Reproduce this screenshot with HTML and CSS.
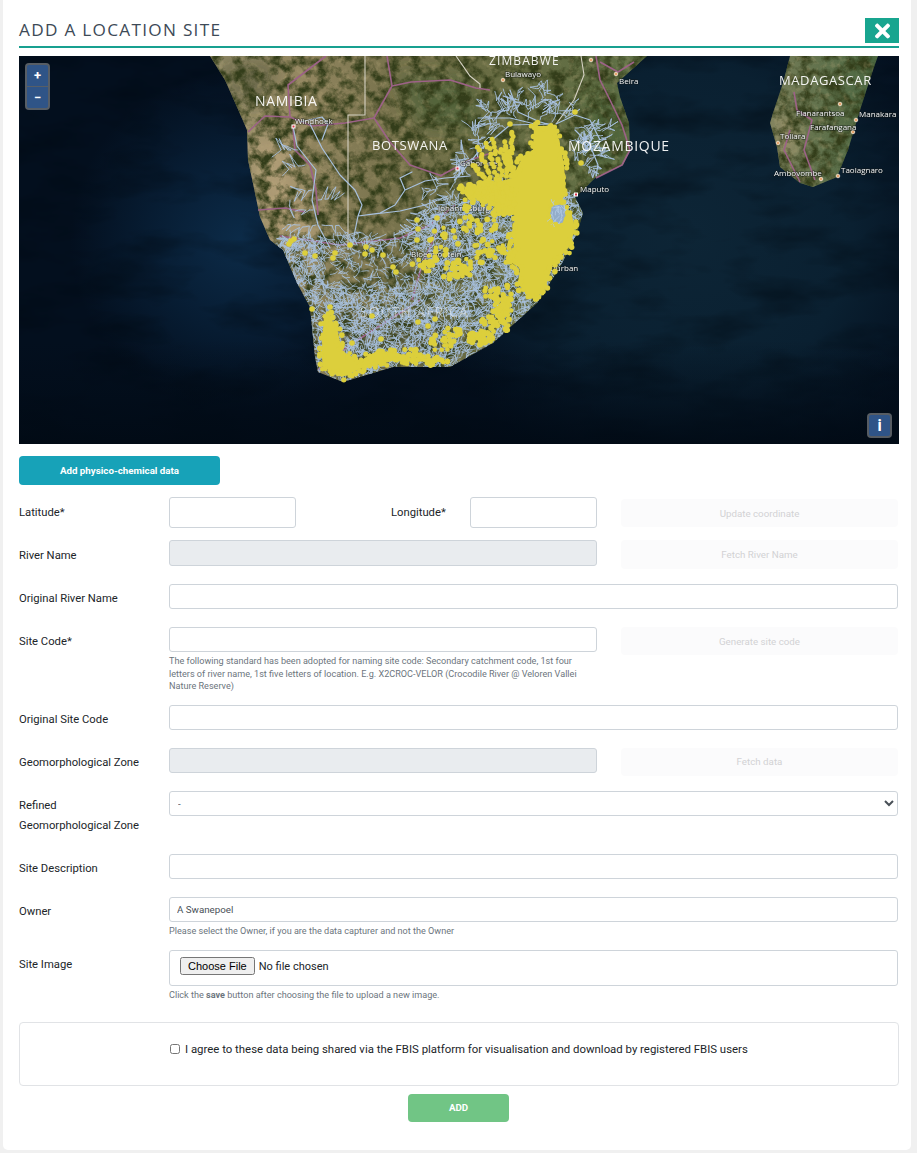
FILE: index.html
```html
<!DOCTYPE html>
<html lang="en">
<head>
<meta charset="utf-8">
<title>Add a location site</title>
<link rel="stylesheet" href="styles.css">
</head>
<body>
<main class="card">
  <header class="head">
    <h1 class="title">ADD A LOCATION SITE</h1>
    <button class="close" type="button" aria-label="Close">
      <svg class="close-icon" viewBox="0 0 352 512"><path d="M242.72 256l100.07-100.07c12.28-12.28 12.28-32.19 0-44.48l-22.24-22.24c-12.28-12.28-32.19-12.28-44.48 0L176 189.28 75.93 89.21c-12.28-12.28-32.19-12.28-44.48 0L9.21 111.45c-12.28 12.28-12.28 32.19 0 44.48L109.28 256 9.21 356.07c-12.28 12.28-12.28 32.19 0 44.48l22.24 22.24c12.28 12.28 32.2 12.28 44.48 0L176 322.72l100.07 100.07c12.28 12.28 32.2 12.28 44.48 0l22.24-22.24c12.28-12.28 12.28-32.19 0-44.48L242.72 256z"/></svg>
    </button>
  </header>

  <section class="map">
    <svg class="map-svg" viewBox="19 56 880 388" xmlns="http://www.w3.org/2000/svg">
      <defs>
        <linearGradient id="landGrad" x1="210" y1="0" x2="640" y2="0" gradientUnits="userSpaceOnUse">
          <stop offset="0" stop-color="#98906c"/>
          <stop offset=".2" stop-color="#958862"/>
          <stop offset=".4" stop-color="#7a744e"/>
          <stop offset=".7" stop-color="#666c42"/>
          <stop offset="1" stop-color="#5e7046"/>
        </linearGradient>
        <linearGradient id="madGrad" x1="770" y1="0" x2="878" y2="0" gradientUnits="userSpaceOnUse">
          <stop offset="0" stop-color="#777d58"/>
          <stop offset="1" stop-color="#48653f"/>
        </linearGradient>
        <radialGradient id="seaWest" cx="240" cy="240" r="170" gradientUnits="userSpaceOnUse">
          <stop offset="0" stop-color="#0c2b48"/>
          <stop offset=".55" stop-color="#071c32"/>
          <stop offset="1" stop-color="#030f1e"/>
        </radialGradient>
        <radialGradient id="seaEast" cx="690" cy="230" r="270" gradientUnits="userSpaceOnUse">
          <stop offset="0" stop-color="#0d2536"/>
          <stop offset=".6" stop-color="#0a2031"/>
          <stop offset="1" stop-color="#0a2031" stop-opacity="0"/>
        </radialGradient>
        <linearGradient id="seaBottom" x1="0" y1="340" x2="0" y2="444" gradientUnits="userSpaceOnUse">
          <stop offset="0" stop-color="#020c18" stop-opacity="0"/>
          <stop offset="1" stop-color="#010a14" stop-opacity=".85"/>
        </linearGradient>
        <clipPath id="landClip">
          <path d="M210 56 225 80 237 107 247 130 248 160 255 193 260 217 270 240 283 250 297 283 310 307 315 357 318 372 343 382 393 367 450 367 493 343 537 303 560 267 577 233 583 213 575 197 583 190 595 178 623 165 630 150 629 123 620 97 617 83 637 65 647 56Z"/>
          <path d="M790 56 783 83 773 113 770 123 777 147 780 167 800 183 813 187 837 177 848 150 860 110 873 70 878 56Z"/>
        </clipPath>
        <filter id="landNoise" x="0" y="0" width="100%" height="100%" color-interpolation-filters="sRGB">
          <feTurbulence type="fractalNoise" baseFrequency=".085" numOctaves="5" seed="7"/>
          <feColorMatrix type="matrix" values="0 0 0 0 .2  0 0 0 0 .24  0 0 0 0 .1  3.2 0 0 0 -1.25"/>
        </filter>
        <filter id="landLight" x="0" y="0" width="100%" height="100%" color-interpolation-filters="sRGB">
          <feTurbulence type="fractalNoise" baseFrequency=".16" numOctaves="3" seed="23"/>
          <feColorMatrix type="matrix" values="0 0 0 0 .74  0 0 0 0 .68  0 0 0 0 .5  0 3 0 0 -1.5"/>
        </filter>
        <filter id="seaNoise" x="0" y="0" width="100%" height="100%" color-interpolation-filters="sRGB">
          <feTurbulence type="fractalNoise" baseFrequency=".012 .03" numOctaves="4" seed="11"/>
          <feColorMatrix type="matrix" values="0 0 0 0 .0  0 0 0 0 .03  0 0 0 0 .06  1 0 0 0 -.42"/>
        </filter>
        <filter id="soft"><feGaussianBlur stdDeviation="9"/></filter>
      </defs>

      <rect class="sea-base" x="19" y="56" width="880" height="388"/>
      <rect x="19" y="56" width="880" height="388" fill="url(#seaWest)"/>
      <rect x="19" y="56" width="880" height="388" fill="url(#seaEast)"/>
      <rect x="19" y="56" width="880" height="388" filter="url(#seaNoise)"/>
      <rect x="19" y="340" width="880" height="104" fill="url(#seaBottom)"/>

      <g clip-path="url(#landClip)">
        <rect x="200" y="56" width="460" height="340" fill="url(#landGrad)"/>
        <rect x="760" y="56" width="130" height="140" fill="url(#madGrad)"/>
        <g filter="url(#soft)">
          <path class="patch-sand" d="M245 135 290 140 300 200 330 250 290 260 262 215Z"/>
          <path class="patch-dark" d="M215 60 280 60 262 105 235 100Z"/>
          <path class="patch-green" d="M395 75 470 80 480 130 420 125Z"/>
          <path class="patch-dark" d="M300 310 420 320 470 355 330 375Z"/>
          <path class="patch-green" d="M590 100 625 100 625 160 590 170Z"/>
          <path class="patch-sand" d="M775 110 790 120 800 150 782 160Z"/>
        </g>
        <rect x="200" y="56" width="700" height="340" filter="url(#landNoise)"/>
        <rect x="200" y="56" width="700" height="340" class="land-light" filter="url(#landLight)"/>
      </g>

      <g class="roads">
        <path d="M248 132 265 116 290 117 312 126 345 123 374 118 392 86 411 82 450 80 476 88 490 90"/>
        <path d="M290 117 288 85 305 72 326 56"/>
        <path d="M392 86 388 62 387 56"/>
        <path d="M374 118 390 142 410 165 442 176"/>
        <path d="M293 127 295 150 310 165 316 190 318 215"/>
        <path d="M258 210 285 208 305 212"/>
        <path d="M440 176 470 160 500 150"/>
        <path d="M596 56 600 80 610 100 622 125 630 150 622 165 596 178"/>
        <path d="M600 62 618 72 634 62"/>
        <path d="M280 236 340 245 400 238 430 225 455 205"/>
        <path d="M412 300 422 265 440 225"/>
        <path d="M318 370 350 345 420 300"/>
        <path d="M794 92 797 110 812 120 804 150 815 180"/>
        <path d="M790 130 784 150 800 182"/>
      </g>
      <g class="borders">
        <path d="M365 56V115H348V250"/>
        <path d="M456 56 470 76 480 84V88"/>
        <path d="M581 56 584 75 574 100 556 124"/>
      </g>

      <g class="rivers" id="rivers" clip-path="url(#landClip)"></g>

      <g class="labels">
        <text class="country lg faded" x="360" y="317">SOUTH AFRICA</text>
        <text class="city" x="411" y="257">Bloemfontein</text>
        <text class="city" x="438" y="211">Johannesburg</text>
        <text class="city" x="460" y="166">Gaborone</text>
        <text class="city" x="550" y="271">Durban</text>
      </g>

      <g class="pins">
        <rect class="pin-red" x="456" y="167" width="3" height="3"/>
        <rect class="pin-red" x="457" y="259" width="3" height="3"/>
      </g>

      <g class="sites" id="sites">
        <path d="M534 126 555 126 559 140 564 165 566 193 560 204 571 212 575 228 570 246 553 265 545 288 536 299 527 294 518 284 520 268 510 262 514 245 512 232 516 215 490 205 478 196 470 192 490 184 512 178 523 156 533 150Z"/>
        <path d="M322 358 323 367 342 377 360 369 393 361 445 362 443 359 410 358 393 351 373 353 360 361 342 351 338 332 329 314 324 316 323 330 322 347Z"/>
      </g>
      <g class="holes" id="holes">
        <path d="M552 206 563 204 566 214 562 224 553 222 550 214Z"/>
      </g>

      <g class="pins">
        <rect class="pin-red" x="292" y="125" width="3" height="3"/>
        <rect class="pin-red" x="574.500" y="193" width="3" height="3"/>
        <circle class="pin-city" cx="503" cy="80" r="1.800"/>
        <circle class="pin-city" cx="591" cy="60" r="1.800"/>
        <circle class="pin-city" cx="616" cy="74" r="1.800"/>
        <circle class="pin-city" cx="840" cy="104" r="1.800"/>
        <circle class="pin-city" cx="853" cy="132" r="1.800"/>
        <circle class="pin-city" cx="778" cy="143" r="1.800"/>
        <circle class="pin-city" cx="821" cy="179" r="1.800"/>
        <circle class="pin-city" cx="838" cy="176" r="1.800"/>
        <circle class="pin-city" cx="856" cy="120" r="1.800"/>
      </g>

      <g class="labels">
        <text class="country lg" x="255" y="106">NAMIBIA</text>
        <text class="country" x="372" y="150">BOTSWANA</text>
        <text class="country lg" x="568" y="151">MOZAMBIQUE</text>
        <text class="country" x="779" y="85">MADAGASCAR</text>
        <text class="country zim" x="489" y="65">ZIMBABWE</text>
        <text class="city" x="295" y="124">Windhoek</text>
        <text class="city" x="505" y="77">Bulawayo</text>
        <text class="city" x="619" y="84">Beira</text>
        <text class="city" x="580" y="192">Maputo</text>
        <text class="city" x="796" y="116">Fianarantsoa</text>
        <text class="city" x="859" y="117">Manakara</text>
        <text class="city" x="810" y="130">Farafangana</text>
        <text class="city" x="780" y="139">Toliara</text>
        <text class="city" x="774" y="176">Ambovombe</text>
        <text class="city" x="841" y="173">Taolagnaro</text>
      </g>
    </svg>
    <div class="zoom-ctl">
      <button class="map-btn" type="button">+</button>
      <button class="map-btn" type="button">&#8722;</button>
    </div>
    <div class="info-ctl">
      <button class="map-btn info" type="button">i</button>
    </div>
  </section>

  <button class="btn-physico" type="button">Add physico-chemical data</button>

  <form class="form">
    <div class="row row-lat">
      <label class="lbl">Latitude*</label>
      <div class="field coords">
        <input class="ctl ctl-tall ctl-short" type="text">
        <label class="lbl-lon">Longitude*</label>
        <input class="ctl ctl-tall ctl-short" type="text">
      </div>
      <button class="btn-side" type="button" disabled>Update coordinate</button>
    </div>

    <div class="row row-river">
      <label class="lbl">River Name</label>
      <div class="field"><input class="ctl ctl-river" type="text" disabled></div>
      <button class="btn-side btn-side-tall" type="button" disabled>Fetch River Name</button>
    </div>

    <div class="row">
      <label class="lbl">Original River Name</label>
      <div class="field"><input class="ctl" type="text"></div>
    </div>

    <div class="row row-code">
      <label class="lbl">Site Code*</label>
      <div class="field">
        <input class="ctl" type="text">
        <small class="hint hint-code">The following standard has been adopted for naming site code: Secondary catchment code, 1st four letters of river name, 1st five letters of location. E.g. X2CROC-VELOR (Crocodile River @ Veloren Vallei Nature Reserve)</small>
      </div>
      <button class="btn-side" type="button" disabled>Generate site code</button>
    </div>

    <div class="row">
      <label class="lbl">Original Site Code</label>
      <div class="field"><input class="ctl" type="text"></div>
    </div>

    <div class="row row-geo">
      <label class="lbl">Geomorphological Zone</label>
      <div class="field"><input class="ctl" type="text" disabled></div>
      <button class="btn-side" type="button" disabled>Fetch data</button>
    </div>

    <div class="row row-refined">
      <label class="lbl">Refined<br>Geomorphological Zone</label>
      <div class="field"><select class="ctl ctl-select"><option>-</option></select></div>
    </div>

    <div class="row">
      <label class="lbl">Site Description</label>
      <div class="field"><input class="ctl" type="text"></div>
    </div>

    <div class="row row-owner">
      <label class="lbl">Owner</label>
      <div class="field">
        <input class="ctl" type="text" value="A Swanepoel">
        <small class="hint">Please select the Owner, if you are the data capturer and not the Owner</small>
      </div>
    </div>

    <div class="row row-image">
      <label class="lbl">Site Image</label>
      <div class="field">
        <input class="ctl ctl-file" type="file">
        <small class="hint">Click the <b>save</b> button after choosing the file to upload a new image.</small>
      </div>
    </div>

    <div class="agree">
      <label class="agree-label"><input class="agree-check" type="checkbox"> I agree to these data being shared via the FBIS platform for visualisation and download by registered FBIS users</label>
    </div>

    <div class="actions"><button class="btn-add" type="button">ADD</button></div>
  </form>
</main>
<script src="map.js"></script>
</body>
</html>
```

FILE: styles.css
```css
* { box-sizing: border-box; }
html, body { margin: 0; padding: 0; }
body {
  background: #f0f0f0;
  font-family: Roboto, "Liberation Sans", sans-serif;
  font-size: 11.25px;
  color: #212529;
  width: 917px;
  height: 1153px;
  overflow: hidden;
}
.card {
  margin-left: 3px;
  width: 908px;
  height: 1150px;
  background: #fff;
  border-radius: 0 0 5px 5px;
  padding: 0 12px 0 16px;
}
.head {
  height: 48px;
  padding-top: 18px;
  display: flex;
  justify-content: space-between;
  border-bottom: 2px solid #18a090;
}
.title {
  margin: 2px 0 0;
  font-family: "Open Sans", sans-serif;
  font-weight: 400;
  font-size: 17.2px;
  line-height: 20px;
  letter-spacing: 1.28px;
  color: #3d4a57;
}
.close {
  width: 34px;
  height: 25px;
  padding: 0;
  border: 0;
  background: #18a58f;
  display: flex;
  align-items: center;
  justify-content: center;
}
.close-icon { width: 15px; height: 22px; fill: #fff; }

.map { position: relative; margin-top: 8px; height: 388px; }
.map-svg { display: block; width: 880px; height: 388px; }
.sea-base { fill: #030e1b; }
.patch-sand { fill: #b8a27c; opacity: .7; }
.patch-dark { fill: #4a4f34; opacity: .55; }
.patch-green { fill: #3f5a32; opacity: .6; }
.land-light { opacity: .3; }
.roads path { fill: none; stroke: #9c6287; stroke-width: 1.6; stroke-linejoin: round; }
.borders path { fill: none; stroke: #d6d2c4; stroke-width: 1.1; }
.rivers path { fill: none; stroke: #a8c1df; stroke-linecap: round; stroke-linejoin: round; }
.sites path, .sites circle, .holes circle { fill: #dccf3c; }
.holes path { fill: #93adca; }
.holes .hole-line { fill: none; stroke: #b4cbe6; stroke-width: .8; }
.pin-red { fill: #d8374a; stroke: #fff; stroke-width: 1; }
.pin-city { fill: #e8a56e; stroke: #f5e7d6; stroke-width: .8; }
.country {
  font-family: "Open Sans", sans-serif;
  font-size: 13px;
  letter-spacing: .6px;
  fill: #fff;
  opacity: .93;
}
.country.lg { font-size: 14px; letter-spacing: .7px; }
.country.faded { opacity: .45; letter-spacing: 1px; }
.country.zim { font-size: 12px; letter-spacing: 1.1px; }
.city {
  font-family: "Open Sans", sans-serif;
  font-size: 8px;
  fill: #f4f4f4;
  paint-order: stroke;
  stroke: rgba(20,25,25,.5);
  stroke-width: 1.5px;
}

.zoom-ctl, .info-ctl {
  position: absolute;
  display: flex;
  flex-direction: column;
  gap: 1px;
  padding: 2px;
  background: rgba(190,190,190,.45);
  border-radius: 4px;
}
.zoom-ctl { left: 6px; top: 7px; }
.info-ctl { right: 7px; bottom: 6px; }
.map-btn {
  width: 21px;
  height: 21px;
  padding: 0;
  border: 0;
  background: #2f5487;
  color: #fff;
  font: 700 13px/21px Roboto, sans-serif;
  text-align: center;
}
.zoom-ctl .map-btn:first-child { border-radius: 2px 2px 0 0; }
.zoom-ctl .map-btn:last-child { border-radius: 0 0 2px 2px; }
.map-btn.info { font-size: 16px; border-radius: 2px; }

.btn-physico {
  display: block;
  margin-top: 12px;
  width: 201px;
  height: 29px;
  padding: 0;
  border: 0;
  border-radius: 4px;
  background: #17a2b8;
  color: #fff;
  font: 700 9.75px/28px Roboto, sans-serif;
}

.form { margin-top: 12px; width: 879px; }
.row { display: flex; align-items: flex-start; margin-bottom: 18px; }
.row-lat { margin-bottom: 12px; }
.row-river { margin-bottom: 15px; }
.row-code { margin-bottom: 12px; }
.row-geo { margin-bottom: 15px; }
.row-owner { margin-bottom: 12.5px; }
.row-image { margin-bottom: 20.5px; }
.lbl { flex: 0 0 150px; padding-top: 6px; line-height: 18px; }
.row-lat .lbl, .row-river .lbl { padding-top: 7px; }
.row-refined .lbl { padding-top: 5px; line-height: 20px; }
.field { flex: 1 1 0; min-width: 0; }
.coords { display: flex; align-items: flex-start; }
.lbl-lon { margin-left: 95px; width: 79px; padding-top: 7px; line-height: 18px; }
.ctl {
  display: block;
  width: 100%;
  height: 25px;
  padding: 0 7px;
  border: 1px solid #ced4da;
  border-radius: 3px;
  background: #fff;
  color: #495057;
  font: 9.75px Roboto, sans-serif;
  outline: none;
}
.ctl:disabled { background: #e9ecef; }
.ctl-tall { height: 31px; }
.ctl-short { width: 127px; flex: 0 0 127px; }
.ctl-river { height: 26px; }
.ctl-select { padding-left: 4px; color: #495057; }
.ctl-file {
  height: 36px;
  padding: 6px 10px;
  font: 11px Roboto, sans-serif;
  color: #212529;
}
.hint {
  display: block;
  margin-top: 3px;
  font-size: 9.1px;
  line-height: 12.5px;
  color: #6c757d;
}
.hint-code { width: 420px; }
.btn-side {
  flex: 0 0 277px;
  margin-left: 24px;
  height: 28px;
  padding: 0;
  border: 0;
  border-radius: 4px;
  background: #fbfbfc;
  color: #d2d2d4;
  font: 9.75px Roboto, sans-serif;
  align-self: flex-start;
}
.row-lat .btn-side { margin-top: 2px; }
.btn-side-tall { height: 29px; }
.agree {
  height: 64px;
  border: 1px solid #e1e3e6;
  border-radius: 4px;
  padding: 16px 0 0 150px;
  width: 880px;
}
.agree-label { display: flex; align-items: center; height: 20px; gap: 5px; line-height: 20px; font-size: 11.4px; }
.agree-check { margin: 0; width: 10px; height: 10px; }
.actions { display: flex; justify-content: center; margin-top: 8px; }
.btn-add {
  width: 101px;
  height: 28px;
  padding: 0;
  border: 0;
  border-radius: 4px;
  background: #71c585;
  color: #fff;
  font: 700 9.75px/26px Roboto, sans-serif;
}
```

FILE: map.js
```js
// Procedurally fills the river network and monitoring-site dots of the map.
(function () {
  var NS = 'http://www.w3.org/2000/svg';
  var seed = 41;
  function rnd() {
    seed |= 0; seed = seed + 0x6D2B79F5 | 0;
    var t = Math.imul(seed ^ seed >>> 15, 1 | seed);
    t = t + Math.imul(t ^ t >>> 7, 61 | t) ^ t;
    return ((t ^ t >>> 14) >>> 0) / 4294967296;
  }
  function inside(x, y, p) {
    var c = false;
    for (var i = 0, j = p.length - 2; i < p.length; j = i, i += 2) {
      if ((p[i + 1] > y) !== (p[j + 1] > y) &&
          x < (p[j] - p[i]) * (y - p[i + 1]) / (p[j + 1] - p[i + 1]) + p[i]) c = !c;
    }
    return c;
  }
  var rivers = document.getElementById('rivers');
  var sites = document.getElementById('sites');
  var holes = document.getElementById('holes');
  function addPath(d, w, o) {
    var el = document.createElementNS(NS, 'path');
    el.setAttribute('d', d);
    el.setAttribute('stroke-width', w);
    if (o) el.setAttribute('opacity', o);
    rivers.appendChild(el);
  }

  function squiggle(x, y, a, steps, len) {
    var s = 'M' + x.toFixed(1) + ' ' + y.toFixed(1);
    for (var i = 0; i < steps; i++) {
      a += (rnd() - .5) * 1.1;
      x += Math.cos(a) * len; y += Math.sin(a) * len;
      s += 'L' + x.toFixed(1) + ' ' + y.toFixed(1);
    }
    return s;
  }

  // dense drainage over South Africa, thinner across the dry interior
  var sa = [276,243, 297,283, 310,307, 315,357, 319,372, 343,382, 393,367, 450,367, 493,343, 537,303, 560,267, 577,233, 583,205, 560,190, 500,180, 470,196, 444,196, 430,212, 420,232, 402,243, 372,236, 340,240, 300,236];
  var d = '';
  for (var n = 0; n < 8000; n++) {
    var x = 270 + rnd() * 315, y = 180 + rnd() * 205;
    if (!inside(x, y, sa)) continue;
    if (x > 325 && x < 425 && y > 245 && y < 285 && rnd() < .7) continue;
    d += squiggle(x, y, rnd() * 6.28, 3, 2 + rnd() * 1.4);
  }
  addPath(d, .8);

  // branching tributaries along the main stems
  function tree(x, y, a, len, depth) {
    var steps = 3 + Math.floor(rnd() * 3);
    var px = x, py = y;
    var s = 'M' + x.toFixed(1) + ' ' + y.toFixed(1);
    for (var i = 0; i < steps; i++) {
      a += (rnd() - .5) * .5;
      px += Math.cos(a) * len; py += Math.sin(a) * len;
      s += 'L' + px.toFixed(1) + ' ' + py.toFixed(1);
      if (depth > 0 && rnd() < .6) s += tree(px, py, a + (rnd() < .5 ? -1 : 1) * (.5 + rnd() * .5), len * .85, depth - 1);
    }
    return s;
  }
  var stems = [
    [[293,126],[297,146],[308,160],[316,170],[312,200],[318,225],[330,248]],
    [[310,124],[322,148],[340,175],[355,190],[362,205],[358,216],[352,246]],
    [[300,122],[322,117],[328,124],[322,140]],
    [[358,216],[380,213],[395,205],[405,190],[425,181],[445,178],[470,176]],
    [[358,216],[400,211],[425,205],[448,196]],
    [[405,190],[400,178],[412,172]],
    [[455,180],[480,150],[510,125],[551,124]],
    [[510,90],[518,112],[540,122],[552,125]],
    [[478,118],[510,118],[535,124]],
    [[556,124],[575,115],[590,120],[600,140]],
    [[575,130],[590,145],[598,165],[596,176]]
  ];
  var trunk = '';
  stems.forEach(function (st) {
    trunk += 'M' + st[0].join(' ');
    for (var i = 1; i < st.length; i++) trunk += 'L' + st[i].join(' ');
  });
  addPath(trunk, 1.2);
  var west = [
    [298,150,3.4,3.4],[305,165,3.1,3.4],[312,190,3.0,3.6],[313,210,3.2,3.6],[316,225,3.1,3.4],[318,200,.1,3.4],[322,225,.2,3.4],[335,235,.1,3],
    [300,225,3.2,3],[295,238,3.2,2.6],[345,232,.4,2.6],[290,200,1.6,3]
  ];
  var east = [
    [430,195,-.4,3.2],[438,208,3,3.2],[428,218,3.3,3.2],[450,190,-1.2,3.2],[445,218,3,3.2],[425,232,3.4,3],[436,190,3.3,2.8],
    [470,175,3.4,3.2],[475,160,3.5,3.4],[480,148,3,3.4],[492,138,3.5,3.4],[505,128,-2.4,3.4],[516,118,-2,3.6],[528,120,-1.6,3.6],[510,115,3.4,3.2],[540,120,-1.4,3.6],[552,122,-1.2,3.4],[498,112,3.1,3],[522,105,-2.2,3],[538,105,-1.2,3],
    [565,118,-.6,3],[575,128,.1,3.2],[583,142,.1,3.2],[590,155,.2,2.6],[582,165,.1,2.4],[572,150,.6,3],[590,128,.2,2.6],[570,140,.3,3]
  ];
  var t = '';
  west.forEach(function (s) { t += tree(s[0], s[1], s[2], s[3], 1); });
  east.forEach(function (s) { t += tree(s[0], s[1], s[2], s[3], 2); });
  addPath(t, .9);

  // monitoring sites
  function dot(x, y, r, parent) {
    var c = document.createElementNS(NS, 'circle');
    c.setAttribute('cx', x.toFixed(1));
    c.setAttribute('cy', y.toFixed(1));
    c.setAttribute('r', r.toFixed(1));
    (parent || sites).appendChild(c);
  }
  // roughen the solid areas with dots along their edges
  Array.prototype.forEach.call(sites.querySelectorAll('path'), function (el) {
    var len = el.getTotalLength();
    for (var l = 0; l < len; l += 3) {
      var p = el.getPointAtLength(l);
      dot(p.x + (rnd() - .5) * 7, p.y + (rnd() - .5) * 7, 2.3 + rnd() * .6);
    }
  });
  var clusters = [
    [490,192,28,8,110],[478,188,20,6,40],[500,204,18,12,40],[470,206,8,8,10],
    [478,224,20,10,22],[445,240,14,14,14],[462,268,12,10,30],[447,270,10,10,12],
    [485,250,12,14,22],[503,303,9,20,50],[497,322,16,12,40],[480,338,13,7,50],[452,332,8,8,14],
    [490,292,6,8,8],[432,262,8,14,12],[422,264,10,6,7],[436,340,6,10,8],[410,352,8,5,9],
    [448,344,8,10,12],[508,250,10,14,22]
  ];
  clusters.forEach(function (c) {
    for (var i = 0; i < c[4]; i++) {
      var a = rnd() * 6.283, r = Math.sqrt(rnd());
      dot(c[0] + Math.cos(a) * c[2] * r, c[1] + Math.sin(a) * c[3] * r, 2.2 + rnd() * .8);
    }
  });
  // radiating fingers north of the Vaal
  var fingers = [[478,147,490,180],[487,143,497,178],[493,140,502,176],[500,150,512,176],[508,152,516,174],[513,132,510,160],[505,143,508,172],[473,165,486,180]];
  fingers.forEach(function (f) {
    for (var i = 0; i <= 10; i++) {
      dot(f[0] + (f[2] - f[0]) * i / 10 + (rnd() - .5) * 3, f[1] + (f[3] - f[1]) * i / 10 + (rnd() - .5) * 3, 2.5);
    }
  });
  var single = [[291,241],[289,244],[294,239],[305,253],[315,256],[333,258],[335,253],[350,245],[365,254],[372,250],[366,247],[383,255],[393,267],[396,272],[372,316],[312,309],[330,307],[352,343],[381,339],[420,355],[433,340],[418,322],[435,319],[428,326],[565,153],[581,163],[575,112],[510,124],[445,255],[418,229],[417,220],[437,218],[417,240],[430,240]];
  single.forEach(function (p) { dot(p[0], p[1], 2.8); });

  // river lines showing through the gaps in the solid areas
  var h = '';
  for (var k = 0; k < 24; k++) h += squiggle(551 + rnd() * 14, 204 + rnd() * 19, rnd() * 6.28, 3, 2.2);
  var hl = document.createElementNS(NS, 'path');
  hl.setAttribute('class', 'hole-line');
  hl.setAttribute('d', h);
  holes.appendChild(hl);
  var edge = [[551,205],[556,203],[562,203],[567,207],[567,213],[566,219],[562,225],[556,224],[551,222],[549,216],[549,210]];
  edge.forEach(function (p) { dot(p[0], p[1], 2.2, holes); });
})();
```
